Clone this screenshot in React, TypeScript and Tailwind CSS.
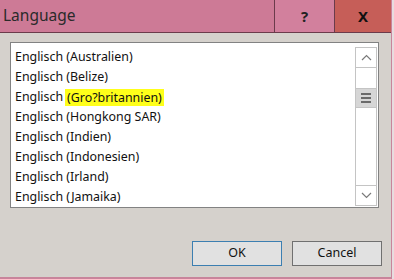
import React from 'react';

const items = [
  'Englisch (Australien)',
  'Englisch (Belize)',
  'Englisch (Gro?britannien)',
  'Englisch (Hongkong SAR)',
  'Englisch (Indien)',
  'Englisch (Indonesien)',
  'Englisch (Irland)',
  'Englisch (Jamaika)',
];

function Chevron({ down }: { down?: boolean }) {
  return (
    <svg width="11" height="7" viewBox="0 0 11 7" className="block">
      <path
        d={down ? 'M1 1 L5.5 5.5 L10 1' : 'M1 6 L5.5 1.5 L10 6'}
        fill="none"
        stroke="#7a7a7a"
        strokeWidth="1.2"
      />
    </svg>
  );
}

export default function App() {
  return (
    <div className="w-[394px] h-[279px] bg-[#e8dcdf] font-['Noto_Sans',sans-serif]">
      <div className="w-[392px] h-[279px] flex flex-col bg-[#d5d1cc] border-r border-b-2 border-[#c9849b]">
        {/* title bar */}
        <div className="h-[33px] flex bg-[#cd7a96] border-b border-[#6b3b4b]">
          <div className="flex-1 flex items-center pl-[3px] text-[15.5px] text-[#2a2a2a]">Language</div>
          <div className="w-[60px] flex items-center justify-center bg-[#d2809d] border-l border-[#6b3b4b] font-bold text-[15px] text-[#222]">
            ?
          </div>
          <div className="w-[57px] flex items-center justify-center bg-[#c65e58] border-l border-[#6b3b4b] font-bold text-[15px] text-[#111]">
            X
          </div>
        </div>

        {/* list */}
        <div className="mt-[9px] ml-[10px] w-[369px] h-[166px] bg-white border border-[#828282] flex">
          <div className="flex-1 pt-[4px] pl-[4px] text-[12.4px] text-[#111] leading-[20px]">
            {items.map((it, i) =>
              i === 2 ? (
                <div key={it} className="h-[20px] flex items-center">
                  <span>Englisch</span>
                  <span className="ml-[2px] h-[17px] leading-[17px] bg-[#ffff1a] px-[2px]">(Gro?britannien)</span>
                </div>
              ) : (
                <div key={it} className="h-[20px]">{it}</div>
              )
            )}
          </div>
          <div className="mt-[4px] mb-[1px] mr-[1px] w-[22px] border border-[#c4c4c4] flex flex-col">
            <div className="h-[20px] border-b border-[#c4c4c4] flex items-center justify-center">
              <Chevron />
            </div>
            <div className="h-[20px]" />
            <div className="h-[20px] bg-[#d6d6d6] border-y border-[#c4c4c4] flex flex-col items-center justify-center gap-[2px]">
              <div className="w-[10px] h-[2px] bg-[#6a6a6a]" />
              <div className="w-[10px] h-[2px] bg-[#6a6a6a]" />
              <div className="w-[10px] h-[2px] bg-[#6a6a6a]" />
            </div>
            <div className="flex-1" />
            <div className="h-[20px] border-t border-[#c4c4c4] flex items-center justify-center">
              <Chevron down />
            </div>
          </div>
        </div>

        {/* buttons */}
        <div className="mt-[33px] flex justify-end gap-[10px] pr-[9px]">
          <button className="w-[90px] h-[25px] bg-[#e1e1e1] border border-[#3c7fb1] text-[12.5px] text-[#111]">OK</button>
          <button className="w-[90px] h-[25px] bg-[#e1e1e1] border border-[#707070] text-[12.5px] text-[#111]">Cancel</button>
        </div>
      </div>
    </div>
  );
}
